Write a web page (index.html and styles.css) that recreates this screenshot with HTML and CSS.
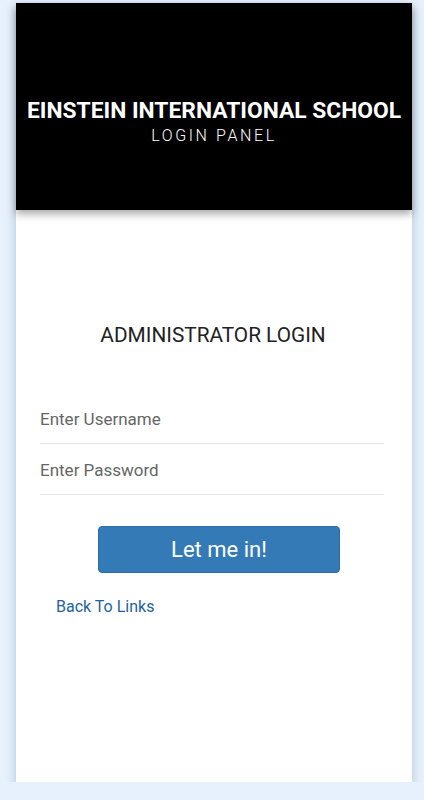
FILE: index.html
```html
<!DOCTYPE html>
<html lang="en">
<head>
    <meta charset="UTF-8">
    <meta name="viewport" content="width=device-width, initial-scale=1.0">
    <title>Admin Login</title>
    <link rel="stylesheet" href="styles.css">
</head>
<body>
    <div class="panel">
        <header class="banner">
            <h1>EINSTEIN INTERNATIONAL SCHOOL</h1>
            <p class="sub">LOGIN PANEL</p>
        </header>

        <form class="login">
            <h2>ADMINISTRATOR LOGIN</h2>
            <input type="text" name="username" placeholder="Enter Username">
            <input type="password" name="password" placeholder="Enter Password">
            <button type="submit">Let me in!</button>
            <a class="back" href="#">Back To Links</a>
        </form>
    </div>
</body>
</html>
```

FILE: styles.css
```css
body {
  margin: 0;
  padding: 0;
  font-family: Roboto, "Liberation Sans", Arial, sans-serif;
  background: #e6f1fd;
}

.panel {
  margin: 3px 12px 0 16px;
  height: 779px;
  background: #fff;
  box-shadow: 0 5px 10px rgba(60, 80, 110, 0.3);
  display: flex;
  flex-direction: column;
}

.banner {
  height: 207px;
  background: #000;
  color: #fff;
  display: flex;
  flex-direction: column;
  align-items: center;
  justify-content: center;
  box-shadow: 0 4px 8px rgba(0, 0, 0, 0.35);
  padding-top: 30px;
  box-sizing: border-box;
}

.banner h1 {
  margin: 0;
  font-size: 22.8px;
  font-weight: 700;
  line-height: 28px;
}

.banner .sub {
  margin: 0;
  font-size: 16px;
  font-weight: 300;
  letter-spacing: 2.6px;
  line-height: 22px;
}

.login {
  display: flex;
  flex-direction: column;
  padding: 0 28px 0 24px;
}

.login h2 {
  margin: 111px 0 44px;
  text-align: center;
  font-size: 20.8px;
  font-weight: 400;
  color: #222;
  line-height: 28px;
  padding-left: 2px;
}

.login input {
  font-family: inherit;
  font-size: 17px;
  line-height: 20px;
  color: #555;
  border: none;
  border-bottom: 1px solid #e8e8e8;
  padding: 16px 0 14px;
  outline: none;
  background: transparent;
}

.login input::placeholder {
  color: #666;
}

.login button {
  margin: 31px 0 0 58px;
  width: 242px;
  height: 47px;
  background: #337ab7;
  border: 1px solid #2e6da4;
  border-radius: 4px;
  color: #fff;
  font-family: inherit;
  font-size: 22px;
  cursor: pointer;
}

.back {
  margin: 22px 0 0 16px;
  color: #23639b;
  font-size: 16px;
  text-decoration: none;
  line-height: 24px;
}
```
